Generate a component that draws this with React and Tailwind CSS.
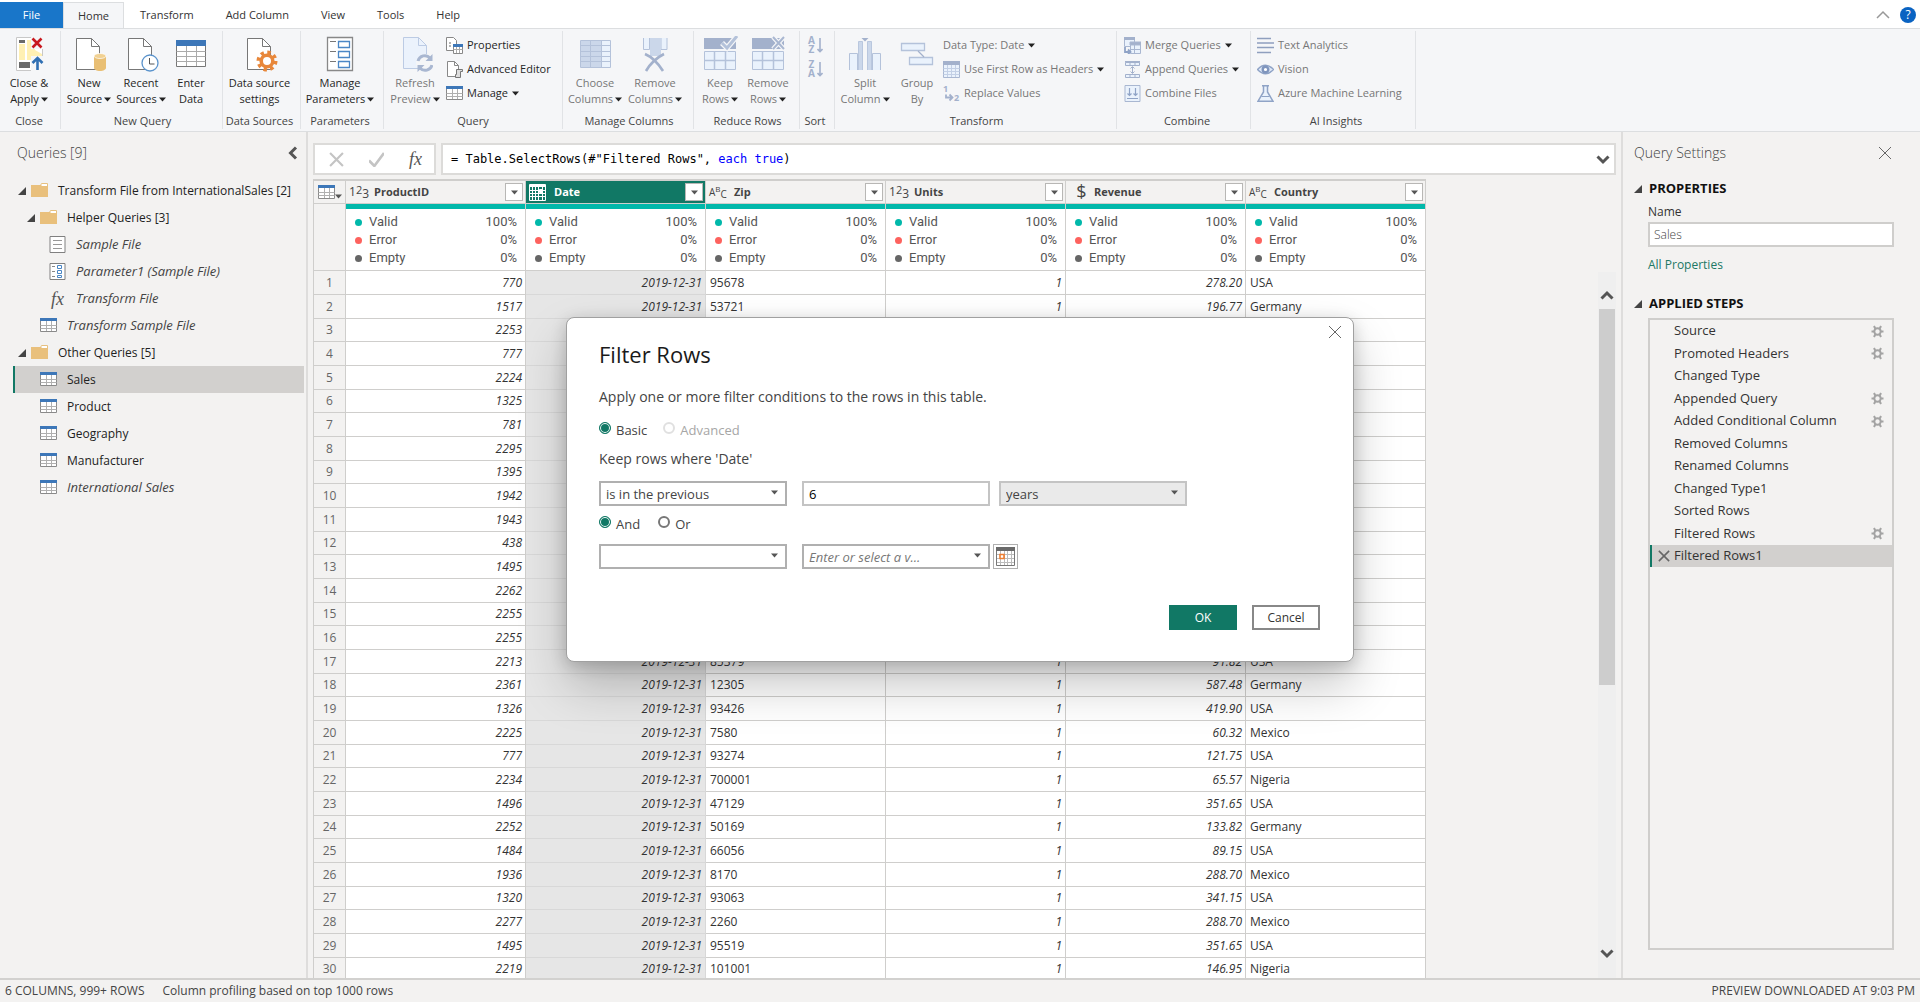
/**
 * @fileoverview Query editor window: ribbon, query list, data preview grid,
 * query settings and the "Filter Rows" dialog.
 */

import { useState } from 'react';

const TABS = ['Transform', 'Add Column', 'View', 'Tools', 'Help'];

const QUERIES = [
  { name: 'Transform File from InternationalSales [2]', type: 'folder', level: 0 },
  { name: 'Helper Queries [3]', type: 'folder', level: 1 },
  { name: 'Sample File', type: 'file', level: 2, italic: true },
  { name: 'Parameter1 (Sample File)', type: 'parameter', level: 2, italic: true },
  { name: 'Transform File', type: 'function', level: 2, italic: true },
  { name: 'Transform Sample File', type: 'table', level: 1, italic: true },
  { name: 'Other Queries [5]', type: 'folder', level: 0 },
  { name: 'Sales', type: 'table', level: 1 },
  { name: 'Product', type: 'table', level: 1 },
  { name: 'Geography', type: 'table', level: 1 },
  { name: 'Manufacturer', type: 'table', level: 1 },
  { name: 'International Sales', type: 'table', level: 1, italic: true },
];

const COLUMNS = [
  { name: 'ProductID', type: 'number' },
  { name: 'Date', type: 'date' },
  { name: 'Zip', type: 'text' },
  { name: 'Units', type: 'number' },
  { name: 'Revenue', type: 'currency' },
  { name: 'Country', type: 'text' },
];

const PROFILE = [
  { label: 'Valid', value: '100%', dot: 'bg-[#01b8aa]' },
  { label: 'Error', value: '0%', dot: 'bg-[#fd625e]' },
  { label: 'Empty', value: '0%', dot: 'bg-[#666666]' },
];

// [ProductID, Zip, Revenue, Country]
const ROWS = [
  [770, '95678', '278.20', 'USA'],
  [1517, '53721', '196.77', 'Germany'],
  [2253], [777], [2224], [1325], [781], [2295], [1395],
  [1942], [1943], [438], [1495], [2262], [2255], [2255],
  [2213, '85379', '91.82', 'USA'],
  [2361, '12305', '587.48', 'Germany'],
  [1326, '93426', '419.90', 'USA'],
  [2225, '7580', '60.32', 'Mexico'],
  [777, '93274', '121.75', 'USA'],
  [2234, '700001', '65.57', 'Nigeria'],
  [1496, '47129', '351.65', 'USA'],
  [2252, '50169', '133.82', 'Germany'],
  [1484, '66056', '89.15', 'USA'],
  [1936, '8170', '288.70', 'Mexico'],
  [1320, '93063', '341.15', 'USA'],
  [2277, '2260', '288.70', 'Mexico'],
  [1495, '95519', '351.65', 'USA'],
  [2219, '101001', '146.95', 'Nigeria'],
];

const STEPS = [
  { name: 'Source', settings: true },
  { name: 'Promoted Headers', settings: true },
  { name: 'Changed Type' },
  { name: 'Appended Query', settings: true },
  { name: 'Added Conditional Column', settings: true },
  { name: 'Removed Columns' },
  { name: 'Renamed Columns' },
  { name: 'Changed Type1' },
  { name: 'Sorted Rows' },
  { name: 'Filtered Rows', settings: true },
  { name: 'Filtered Rows1' },
];

/* ---------- Icons ---------- */

function Caret({ className = '' }) {
  return (
    <svg className={`inline-block shrink-0 ${className}`} width="7" height="5" viewBox="0 0 7 5" aria-hidden="true">
      <path d="M0 .5h7L3.5 4.5z" fill="currentColor" />
    </svg>
  );
}

function Chevron({ d, size = 14, width = 3, color = '#555' }) {
  return (
    <svg width={size} height={size} viewBox="0 0 14 14" fill="none" stroke={color} strokeWidth={width} aria-hidden="true">
      <path d={d} />
    </svg>
  );
}

function CrossIcon({ size = 14, width = 1, color = '#666' }) {
  return (
    <svg width={size} height={size} viewBox="0 0 14 14" stroke={color} strokeWidth={width} aria-hidden="true">
      <path d="M1 1l12 12M13 1L1 13" />
    </svg>
  );
}

function BigIcon({ children }) {
  return (
    <svg className="shrink-0" width="36" height="36" viewBox="0 0 36 36" fill="none" aria-hidden="true">
      {children}
    </svg>
  );
}

function SmallIcon({ children }) {
  return (
    <svg className="shrink-0" width="17" height="17" viewBox="0 0 17 17" fill="none" aria-hidden="true">
      {children}
    </svg>
  );
}

function CloseApplyIcon() {
  return (
    <BigIcon>
      <path d="M5.500 1.500h26v33h-26z" fill="#fff" stroke="#c8c8c8" />
      <path d="M8 8h6v16H8zM16 4h8v20h-8z" fill="#fff0b3" />
      <path d="M24 14l7 4v6h-7z" fill="#fff0b3" />
      <path d="M8 4h6v3H8zM8 26h11v6H8z" fill="#6a6a6a" />
      <path d="M20 0h13v13H20z" fill="#f5f6f8" />
      <path d="M21.500 2.500l9 9M30.500 2.500l-9 9" stroke="#c8181e" strokeWidth="2.600" />
      <path d="M20 20h13v15H20z" fill="#f5f6f8" />
      <path d="M26.500 34V23M21.500 27l5-5 5 5" stroke="#2f6fb3" strokeWidth="2.600" />
    </BigIcon>
  );
}

function NewSourceIcon() {
  return (
    <BigIcon>
      <path d="M5.500 2.500h15l8 8v23h-23z" fill="#fff" stroke="#777" />
      <path d="M20.500 2.500v8h8" stroke="#777" />
      <path d="M23 20v12c0 1.500 2.500 3 6 3s6-1.500 6-3V20z" fill="#e9bf74" />
      <ellipse cx="29" cy="20" rx="6" ry="2.500" fill="#f1d193" stroke="#fff" strokeWidth=".7" />
    </BigIcon>
  );
}

function RecentIcon() {
  return (
    <BigIcon>
      <path d="M5.500 2.500h15l8 8v23h-23z" fill="#fff" stroke="#777" />
      <path d="M20.500 2.500v8h8" stroke="#777" />
      <circle cx="27" cy="27" r="8" fill="#fff" stroke="#5a93cc" strokeWidth="1.300" />
      <path d="M26.500 22v6h5" stroke="#555" />
    </BigIcon>
  );
}

function EnterDataIcon() {
  return (
    <BigIcon>
      <path d="M3.500 5.500h29v25h-29z" fill="#fff" stroke="#777" />
      <path d="M3 4h30v6H3z" fill="#3d77b8" />
      <path d="M3.500 15.500h29M3.500 20.500h29M3.500 25.500h29M13.500 10v20M23.500 10v20" stroke="#aaa" />
    </BigIcon>
  );
}

function SourceSettingsIcon() {
  return (
    <BigIcon>
      <path d="M5.500 2.500h15l8 8v23h-23z" fill="#fff" stroke="#777" />
      <path d="M20.500 2.500v8h8" stroke="#777" />
      <circle cx="25" cy="25" r="8.500" fill="none" stroke="#e8873a" strokeWidth="4" strokeDasharray="3.340 3.340" />
      <circle cx="25" cy="25" r="5.800" fill="#fff" stroke="#e8873a" strokeWidth="3.600" />
    </BigIcon>
  );
}

function ParametersIcon() {
  return (
    <BigIcon>
      <path d="M5.500 1.500h25v33h-25z" fill="#fff" stroke="#888" strokeWidth="1.300" />
      <path d="M16.500 5.500h11v6h-11zM16.500 15.500h11v6h-11zM16.500 25.500h11v6h-11z" stroke="#4a86c5" strokeWidth="1.300" />
      <path d="M8 5.500h6M8 15.500h6M8 25.500h6" stroke="#777" />
    </BigIcon>
  );
}

function RefreshIcon() {
  return (
    <BigIcon>
      <path d="M6.500 1.500h15l8 8v23h-23z" fill="#ebf2fc" stroke="#bccbe4" />
      <path d="M21.500 1.500v8h8" stroke="#bccbe4" />
      <circle cx="28" cy="27" r="9" fill="#f5f6f8" />
      <path d="M21 25a7 7 0 0 1 12-3M35 29a7 7 0 0 1-12 3" stroke="#a9b7d1" strokeWidth="3" />
      <path d="M35.500 18v7h-7zM20.500 36v-7h7z" fill="#a9b7d1" />
    </BigIcon>
  );
}

function ChooseColumnsIcon() {
  return (
    <BigIcon>
      <path d="M3.500 4.500h30v27h-30z" fill="#eaf2fc" stroke="#b4c2da" />
      <path d="M4 5h20v26H4z" fill="#cbd7ea" />
      <path d="M3.500 9.500h30M3.500 15.500h30M3.500 20.500h30M3.500 25.500h30M13.500 5v26M24.500 5v26" stroke="#b4c2da" />
    </BigIcon>
  );
}

function RemoveColumnsIcon() {
  return (
    <BigIcon>
      <path d="M6.500 2v11.500h6V2M24 2v11.500h6V2" fill="#eaf2fc" stroke="#b4c2da" />
      <path d="M13 2h11v18H13z" fill="#cbd7ea" />
      <path d="M8 18c7 3 13 9 18 17M27 18c-8 4-14 10-18 17" stroke="#a3b1cc" strokeWidth="2.600" />
    </BigIcon>
  );
}

function RowsIcon({ cross }) {
  return (
    <BigIcon>
      <path d="M2 2h32v11H2z" fill="#a3b1cc" />
      <path d="M2.500 15.500h31v18h-31z" fill="#eaf2fc" stroke="#b4c2da" />
      <path d="M2.500 24.500h31M12.500 15v18M23.500 15v18" stroke="#b4c2da" strokeWidth="1.500" />
      {cross ? (
        <>
          <path d="M23 1l11 12M34 1L23 13" stroke="#f5f6f8" strokeWidth="4.500" />
          <path d="M23 1l11 12M34 1L23 13" stroke="#a9b7d1" strokeWidth="2" />
        </>
      ) : (
        <>
          <path d="M20 7l5 5L35 0" stroke="#f5f6f8" strokeWidth="5.500" />
          <path d="M20 7l5 5L35 0" stroke="#b4c2da" strokeWidth="3" />
        </>
      )}
    </BigIcon>
  );
}

function SplitIcon() {
  return (
    <BigIcon>
      <path d="M2.500 34V17.500h8V34M25.500 34V17.500h8V34" fill="#eaf2fc" stroke="#b4c2da" />
      <path d="M11.500 34V5.500h4V34M20.500 34V5.500h4V34" fill="#cbd7ea" stroke="#b9c7de" />
      <path d="M14.500 2h7L18 5.500z" fill="#a3b1cc" />
    </BigIcon>
  );
}

function GroupIcon() {
  return (
    <BigIcon>
      <path d="M2.500 7.500h23v7h-23zM10.500 21.500h23v7h-23z" fill="#eaf2fc" stroke="#b4c2da" strokeWidth="1.300" />
      <path d="M19 15l6 6" stroke="#a3b1cc" strokeWidth="1.300" />
    </BigIcon>
  );
}

function TableIcon() {
  return (
    <SmallIcon>
      <path d="M.500 1.500h16v13H.500z" fill="#fff" stroke="#8a8a8a" />
      <path d="M.500 8.500h16M.500 11.500h16M6.500 4v10M11.500 4v10" stroke="#b0b0b0" />
      <path d="M0 1h17v3H0z" fill="#3d77b8" />
    </SmallIcon>
  );
}

function HeadersIcon() {
  return (
    <SmallIcon>
      <path d="M.500.500h16v16H.500z" fill="#eaf2fc" stroke="#a9b7d1" />
      <path d="M.500 7.500h16M.500 10.500h16M.500 13.500h16M4.500 4v12M8.500 4v12M12.500 4v12" stroke="#c3d0e6" />
      <path d="M0 0h17v4H0z" fill="#a3b1cc" />
    </SmallIcon>
  );
}

function PropertiesIcon() {
  return (
    <SmallIcon>
      <path d="M.500.500h7l3 3v10H.500z" fill="#fff" stroke="#888" />
      <path d="M3 6h2M3 9h2" stroke="#666" />
      <path d="M7.500 7.500h9v9h-9z" fill="#fff" stroke="#888" />
      <path d="M7 7h10v3H7z" fill="#3d77b8" />
      <path d="M7.500 12.500h9M10.500 10v6M13.500 10v6" stroke="#aaa" />
    </SmallIcon>
  );
}

function EditorIcon() {
  return (
    <SmallIcon>
      <path d="M1.500.500h7l4 4v11h-11z" fill="#fff" stroke="#888" />
      <path d="M8.500.500v4h4" stroke="#888" />
      <path d="M10.500 8.500h6v2h-2v6h-5v-3h1z" fill="#ddd" stroke="#777" />
    </SmallIcon>
  );
}

function ReplaceIcon() {
  return (
    <SmallIcon>
      <text x="0" y="7" fontSize="9" fontWeight="700" fill="#a3b1cc">1</text>
      <text x="11" y="16" fontSize="9" fontWeight="700" fill="#a3b1cc">2</text>
      <path d="M3 9.500v3h6M6.500 9.500l3 3-3 3" stroke="#a3b1cc" strokeWidth="1.800" />
    </SmallIcon>
  );
}

function MergeIcon() {
  return (
    <SmallIcon>
      <path d="M.500.500h10v9H.500z" fill="#eaf2fc" stroke="#a9b7d1" />
      <path d="M0 0h11v3H0z" fill="#a3b1cc" />
      <path d="M6.500 5.500h10v11h-10z" fill="#eaf2fc" stroke="#a9b7d1" />
      <path d="M6 5h11v3H6zM10.500 8v8M6.500 12.500h10" fill="#a3b1cc" stroke="#a9b7d1" />
      <path d="M1 10v5h5M4 12.500L6.500 15 4 17" stroke="#8fa3c6" strokeWidth="1.800" />
    </SmallIcon>
  );
}

function AppendIcon() {
  return (
    <SmallIcon>
      <path d="M1.500 1.500h14v3h-14zM1.500 13.500h14v3h-14zM6 2v2M11 2v2M6 14v2M11 14v2" fill="#eaf2fc" stroke="#a3b1cc" />
      <path d="M1 .500h15" stroke="#a3b1cc" strokeWidth="2" />
      <path d="M8.500 6v6M6.500 7.500l2-2 2 2M6.500 10.500l2 2 2-2" stroke="#a3b1cc" />
    </SmallIcon>
  );
}

function CombineIcon() {
  return (
    <SmallIcon>
      <path d="M1 .500h15v16H1z" fill="#eaf2fc" stroke="#a9b7d1" />
      <path d="M5.500 3v7M3.500 8.500l2 2 2-2M11.500 3v7M9.500 8.500l2 2 2-2M3 13.500h11" stroke="#8fa3c6" strokeWidth="1.200" />
    </SmallIcon>
  );
}

function TextAnalyticsIcon() {
  return (
    <SmallIcon>
      <path d="M0 1.500h14M0 6h17M0 10.500h17M0 15.500h14" stroke="#8f9fbe" strokeWidth="1.600" />
    </SmallIcon>
  );
}

function VisionIcon() {
  return (
    <SmallIcon>
      <path d="M.500 8.500Q8.500 0 16.500 8.500 8.500 17 .500 8.500z" fill="#dfe9f8" stroke="#8fa3c6" strokeWidth="1.500" />
      <circle cx="8.500" cy="8.500" r="2.800" fill="#fff" stroke="#7f95bd" strokeWidth="2.400" />
    </SmallIcon>
  );
}

function FlaskIcon() {
  return (
    <SmallIcon>
      <path d="M5 .800h7M6.500 1v6L1 16.200h15L10.500 7V1" fill="#eaf2fc" stroke="#8fa3c6" strokeWidth="1.500" />
      <path d="M4.500 11.500h8" stroke="#8fa3c6" />
    </SmallIcon>
  );
}

function SortIcon({ top, bottom }) {
  return (
    <span className="flex gap-px text-[10px] leading-[9px] font-bold text-[#a3b1cc]">
      <span className="flex w-2 flex-col items-center">
        <span>{top}</span>
        <span>{bottom}</span>
      </span>
      <svg width="6" height="18" viewBox="0 0 6 18" fill="none" stroke="currentColor" strokeWidth="1.600" aria-hidden="true">
        <path d="M3 2v14M.500 13L3 15.500 5.500 13" />
      </svg>
    </span>
  );
}

function QueryIcon({ type }) {
  if (type === 'folder') {
    return (
      <SmallIcon>
        <path d="M9.500 3.500l1-2h6v3" fill="#fff" stroke="#e6c080" />
        <path d="M0 3h10l1 1h6v11H0z" fill="#e9c07c" />
      </SmallIcon>
    );
  }
  if (type === 'file') {
    return (
      <SmallIcon>
        <path d="M1 .500h15v16H1z" fill="#fff" stroke="#808080" />
        <path d="M4 4.500h9M4 8.500h9M4 12.500h9" stroke="#999" />
      </SmallIcon>
    );
  }
  if (type === 'parameter') {
    return (
      <SmallIcon>
        <path d="M1 .500h15v16H1z" fill="#fff" stroke="#808080" />
        <path d="M8.500 2.500h4v3h-4zM8.500 7.500h4v3h-4zM8.500 12.500h4v2h-4z" stroke="#4a86c5" />
        <path d="M3 3.500h3M3 8.500h3M3 13.500h3" stroke="#888" />
      </SmallIcon>
    );
  }
  if (type === 'function') {
    return <span className="w-[17px] text-center font-['Liberation_Serif',serif] text-lg leading-4 text-[#555] italic">fx</span>;
  }
  return <TableIcon />;
}

function TypeIcon({ type }) {
  if (type === 'date') {
    return (
      <svg width="17" height="17" viewBox="0 0 17 17" fill="none" stroke="#fff" aria-hidden="true">
        <path d="M.500.500h16v16H.500z" />
        <path d="M0 2h17" strokeWidth="2" />
        <path d="M.500 6.500h16M.500 9.500h16M.500 12.500h16M3.500 3v13M6.500 3v13M9.500 3v13M13.500 3v13" />
        <path d="M10.500 5.500h3v3h-3z" fill="#fff" />
      </svg>
    );
  }
  if (type === 'currency') {
    return <span className="text-lg leading-5 font-normal">$</span>;
  }
  const [a, b, c] = type === 'number' ? ['1', '2', '3'] : ['A', 'B', 'C'];
  return (
    <span className={`flex items-center leading-none font-normal ${type === 'number' ? 'text-[12px]' : 'text-[10px]'}`}>
      <span>{a}</span>
      <span className={`-mt-1.5 ${type === 'number' ? 'text-[11px]' : 'text-[8px]'}`}>{b}</span>
      <span className="mt-1">{c}</span>
    </span>
  );
}

function GearIcon() {
  return (
    <svg width="13" height="13" viewBox="0 0 13 13" fill="none" stroke="#a3a3a3" aria-hidden="true">
      <circle cx="6.500" cy="6.500" r="3.200" strokeWidth="2" />
      <path d="M3 6.500H.500M10 6.500h2.500M4.500 4L3 1M8.500 4L10 1M4.500 9L3 12M8.500 9l1.500 3" strokeWidth="2" />
    </svg>
  );
}

function CalendarIcon() {
  return (
    <svg width="19" height="19" viewBox="0 0 19 19" fill="none" aria-hidden="true">
      <path d="M.500.500h18v18H.500z" fill="#fff" stroke="#777" />
      <path d="M1 7.500h17M1 11.500h17M1 15.500h17M4.500 4v14M8.500 4v14M11.500 4v14M15.500 4v14" stroke="#bbb" />
      <path d="M0 0h19v4H0z" fill="#6a6a6a" />
      <path d="M4 7.500h4v4H4z" fill="#fff" stroke="#ed7d31" strokeWidth="1.600" />
    </svg>
  );
}

function ExpandArrow() {
  return (
    <svg className="shrink-0" width="8" height="8" viewBox="0 0 8 8" aria-hidden="true">
      <path d="M8 0v8H0z" fill="#444" />
    </svg>
  );
}

/* ---------- Ribbon ---------- */

function RibbonGroup({ label, className, children }) {
  return (
    <section className={`flex shrink-0 flex-col border-r border-[#e1e3e6] ${className}`}>
      <div className="flex h-[82px] pt-[5px]">{children}</div>
      <h2 className="text-center text-[11px] leading-4 text-[#444]">{label}</h2>
    </section>
  );
}

function BigButton({ icon, lines, caret, disabled, className }) {
  return (
    <button
      type="button"
      disabled={disabled}
      className={`flex h-[72px] shrink-0 flex-col items-center text-[11px] leading-4 whitespace-nowrap ${disabled ? 'text-[#777]' : 'text-[#262626]'} ${className}`}
    >
      {icon}
      <span className="pt-[3px]">{lines[0]}</span>
      <span className="flex items-center gap-0.5">
        {lines[1]}
        {caret && <Caret className="text-[#222]" />}
      </span>
    </button>
  );
}

function SmallColumn({ children }) {
  return <div className="-mt-[3px]">{children}</div>;
}

function SmallButton({ icon, label, caret, disabled }) {
  return (
    <button
      type="button"
      disabled={disabled}
      className={`flex h-6 items-center gap-1 text-[11px] whitespace-nowrap ${disabled ? 'text-[#777]' : 'text-[#262626]'}`}
    >
      {icon}
      {label}
      {caret && <Caret className="text-[#222]" />}
    </button>
  );
}

function Ribbon() {
  return (
    <div className="flex overflow-hidden border-y border-[#dcdee0] bg-[#f5f6f8] py-0.5">
      <RibbonGroup label="Close" className="w-[61px] pr-0.5">
        <BigButton className="w-[58px]" icon={<CloseApplyIcon />} lines={['Close &', 'Apply']} caret />
      </RibbonGroup>
      <RibbonGroup label="New Query" className="w-[162px] pl-0.5">
        <BigButton className="w-[52px]" icon={<NewSourceIcon />} lines={['New', 'Source']} caret />
        <BigButton className="w-[52px]" icon={<RecentIcon />} lines={['Recent', 'Sources']} caret />
        <BigButton className="w-12" icon={<EnterDataIcon />} lines={['Enter', 'Data']} />
      </RibbonGroup>
      <RibbonGroup label="Data Sources" className="w-[78px] pr-1">
        <BigButton className="w-full" icon={<SourceSettingsIcon />} lines={['Data source', 'settings']} />
      </RibbonGroup>
      <RibbonGroup label="Parameters" className="w-[83px] pr-1">
        <BigButton className="w-full" icon={<ParametersIcon />} lines={['Manage', 'Parameters']} caret />
      </RibbonGroup>
      <RibbonGroup label="Query" className="w-[179px]">
        <BigButton className="w-[62px]" icon={<RefreshIcon />} lines={['Refresh', 'Preview']} caret disabled />
        <SmallColumn>
          <SmallButton icon={<PropertiesIcon />} label="Properties" />
          <SmallButton icon={<EditorIcon />} label="Advanced Editor" />
          <SmallButton icon={<TableIcon />} label="Manage" caret />
        </SmallColumn>
      </RibbonGroup>
      <RibbonGroup label="Manage Columns" className="w-[131px] pl-0.5">
        <BigButton className="w-[60px]" icon={<ChooseColumnsIcon />} lines={['Choose', 'Columns']} caret disabled />
        <BigButton className="w-[60px]" icon={<RemoveColumnsIcon />} lines={['Remove', 'Columns']} caret disabled />
      </RibbonGroup>
      <RibbonGroup label="Reduce Rows" className="w-[106px] pl-0.5">
        <BigButton className="w-12" icon={<RowsIcon />} lines={['Keep', 'Rows']} caret disabled />
        <BigButton className="w-12" icon={<RowsIcon cross />} lines={['Remove', 'Rows']} caret disabled />
      </RibbonGroup>
      <RibbonGroup label="Sort" className="w-[35px] pr-1">
        <div className="flex w-full flex-col items-center gap-1.5">
          <button type="button" disabled aria-label="Sort ascending"><SortIcon top="A" bottom="Z" /></button>
          <button type="button" disabled aria-label="Sort descending"><SortIcon top="Z" bottom="A" /></button>
        </div>
      </RibbonGroup>
      <RibbonGroup label="Transform" className="w-[282px] pl-0.5">
        <BigButton className="w-14" icon={<SplitIcon />} lines={['Split', 'Column']} caret disabled />
        <BigButton className="w-12" icon={<GroupIcon />} lines={['Group', 'By']} disabled />
        <div className="pl-0.5">
          <SmallColumn>
            <SmallButton label="Data Type: Date" caret disabled />
            <SmallButton icon={<HeadersIcon />} label="Use First Row as Headers" caret disabled />
            <SmallButton icon={<ReplaceIcon />} label="Replace Values" disabled />
          </SmallColumn>
        </div>
      </RibbonGroup>
      <RibbonGroup label="Combine" className="w-[134px] pl-[7px]">
        <SmallColumn>
          <SmallButton icon={<MergeIcon />} label="Merge Queries" caret disabled />
          <SmallButton icon={<AppendIcon />} label="Append Queries" caret disabled />
          <SmallButton icon={<CombineIcon />} label="Combine Files" disabled />
        </SmallColumn>
      </RibbonGroup>
      <RibbonGroup label="AI Insights" className="w-[165px] pl-1.5">
        <SmallColumn>
          <SmallButton icon={<TextAnalyticsIcon />} label="Text Analytics" disabled />
          <SmallButton icon={<VisionIcon />} label="Vision" disabled />
          <SmallButton icon={<FlaskIcon />} label="Azure Machine Learning" disabled />
        </SmallColumn>
      </RibbonGroup>
    </div>
  );
}

function TabBar() {
  return (
    <nav className="flex h-[28px] shrink-0 bg-white pt-0.5 text-[11px] text-[#333]">
      <button type="button" className="w-[63px] bg-[#1976c9] text-white">File</button>
      <button type="button" className="-mb-px w-[61px] border-x border-t border-[#dcdee0] bg-[#f5f6f8]">Home</button>
      {TABS.map(tab => (
        <button key={tab} type="button" className="px-4">{tab}</button>
      ))}
      <div className="ml-auto flex items-center gap-2.5 pr-1">
        <button type="button" aria-label="Collapse ribbon">
          <Chevron d="M1 10l6-6 6 6" width={1.5} color="#999" />
        </button>
        <button type="button" aria-label="Help" className="size-4 rounded-full bg-[#0a63c2] text-[12px] leading-4 text-white">?</button>
      </div>
    </nav>
  );
}

/* ---------- Queries pane ---------- */

function QueriesPane({ selected, onSelect }) {
  return (
    <aside className="w-[308px] shrink-0 border-r-2 border-[#dedddc]">
      <div className="mb-[3px] flex h-[42px] items-center justify-between pr-1.5 pl-[17px]">
        <h2 className="text-sm font-light text-[#444]">Queries [9]</h2>
        <button type="button" aria-label="Collapse queries pane"><Chevron d="M10 1.500L4.500 7l5.500 5.500" /></button>
      </div>
      <ul>
        {QUERIES.map(q => (
          <li key={q.name} className="pr-0.5 pl-[13px]">
            <button
              type="button"
              onClick={() => onSelect(q.name)}
              className={`flex h-[27px] w-full items-center border-l-2 whitespace-nowrap ${selected === q.name ? 'border-[#117865] bg-[#d2d0ce]' : 'border-transparent'}`}
            >
              <span className={`flex justify-end ${q.level === 0 ? 'w-[11px]' : q.level === 1 ? 'w-5' : 'w-[29px]'}`}>
                {q.type === 'folder' && <ExpandArrow />}
              </span>
              <span className="ml-[5px] flex w-[17px]"><QueryIcon type={q.type} /></span>
              <span className={`ml-2.5 ${q.italic ? 'text-[13px] text-[#444] italic' : 'text-[12px] text-[#222]'}`}>{q.name}</span>
            </button>
          </li>
        ))}
      </ul>
    </aside>
  );
}

/* ---------- Data preview ---------- */

function FormulaBar() {
  return (
    <div className="flex h-8 shrink-0 gap-[5px]">
      <div className="flex w-[123px] items-center justify-between border-2 border-[#dcdbd9] bg-white pr-3 pl-3.5">
        <button type="button" aria-label="Discard formula"><CrossIcon size={15} width={2} color="#c4c4c4" /></button>
        <button type="button" aria-label="Commit formula"><Chevron d="M0 8l5 5L14 1" size={15} width={2.5} color="#c4c4c4" /></button>
        <button type="button" className="font-['Liberation_Serif',serif] text-lg leading-6 text-[#555] italic">fx</button>
      </div>
      <div className="flex flex-1 items-center border-2 border-[#dcdbd9] bg-white pr-1 pl-2">
        <code className="flex-1 font-['DejaVu_Sans_Mono',monospace] text-[12px] whitespace-pre text-black">
          = Table.SelectRows(#"Filtered Rows", <span className="text-[#0000ff]">each true</span>)
        </code>
        <button type="button" aria-label="Expand formula bar"><Chevron d="M1.500 4.500L7 10l5.500-5.500" /></button>
      </div>
    </div>
  );
}

function ColumnHeader({ column, active }) {
  return (
    <th scope="col" className={`border-r border-b border-[#cfcecc] p-0 ${active ? 'bg-[#117865] text-white' : 'text-[#444]'}`}>
      <div className="flex h-[22px] items-center pr-0.5 pl-[3px]">
        <span className="w-[25px] shrink-0"><TypeIcon type={column.type} /></span>
        <span className="flex-1 text-left text-[11px]">{column.name}</span>
        <button type="button" aria-label={`Filter ${column.name}`} className="flex size-[18px] items-center justify-center border border-[#b8b7b5] bg-white text-[#555]">
          <Caret />
        </button>
      </div>
    </th>
  );
}

function ProfileCell() {
  return (
    <td className="border-r border-b border-[#cfcecc] bg-white p-0">
      <div className="h-[5px] bg-[#01b8aa]" />
      <ul className="px-2 pt-1 pb-[3px] pl-[9px] font-['Roboto',sans-serif] text-[13px] leading-[18px] text-[#555]">
        {PROFILE.map(p => (
          <li key={p.label} className="flex items-center">
            <span className={`mr-[7px] size-[7px] rounded-full ${p.dot}`} />
            <span className="flex-1">{p.label}</span>
            <span>{p.value}</span>
          </li>
        ))}
      </ul>
    </td>
  );
}

function DataGrid() {
  const cell = 'border-r border-b border-[#cfcecc] py-0';
  return (
    <table className="w-[1113px] shrink-0 table-fixed border-separate border-spacing-0 border-t-2 border-l border-[#cfcecc] text-[12px] leading-5 text-[#333]">
      <colgroup>
        <col className="w-8" />
        {COLUMNS.map(c => <col key={c.name} className="w-[180px]" />)}
      </colgroup>
      <thead>
        <tr>
          <th className="border-r border-b border-[#cfcecc] p-0">
            <button type="button" aria-label="Table options" className="flex h-[22px] w-full items-center justify-center">
              <TableIcon />
              <Caret className="mt-2 text-[#555]" />
            </button>
          </th>
          {COLUMNS.map(c => <ColumnHeader key={c.name} column={c} active={c.name === 'Date'} />)}
        </tr>
      </thead>
      <tbody>
        <tr>
          <td className={cell} />
          {COLUMNS.map(c => <ProfileCell key={c.name} />)}
        </tr>
        {ROWS.map(([id, zip, revenue, country], i) => (
          <tr key={i} className={i % 3 === 2 ? 'h-[23px]' : 'h-6'}>
            <td className={`${cell} text-center text-[#666]`}>{i + 1}</td>
            <td className={`${cell} bg-white pr-[3px] text-right italic`}>{id}</td>
            <td className="border-r border-b border-[#d8d8d8] bg-[#e6e6e6] py-0 pr-[3px] text-right italic">2019-12-31</td>
            <td className={`${cell} bg-white pl-1`}>{zip}</td>
            <td className={`${cell} bg-white pr-[3px] text-right italic`}>1</td>
            <td className={`${cell} bg-white pr-[3px] text-right italic`}>{revenue}</td>
            <td className={`${cell} bg-white pl-1`}>{country}</td>
          </tr>
        ))}
      </tbody>
    </table>
  );
}

function ScrollBar() {
  return (
    <div className="mt-[93px] flex w-[18px] flex-col items-center bg-[#efefef]">
      <button type="button" aria-label="Scroll up" className="flex h-[37px] items-end pb-1.5"><Chevron d="M1.500 9.500L7 4l5.500 5.500" /></button>
      <div className="w-4 flex-1">
        <div className="h-[59%] bg-[#cdcdcd]" />
      </div>
      <button type="button" aria-label="Scroll down" className="flex h-8"><Chevron d="M1.500 4.500L7 10l5.500-5.500" /></button>
    </div>
  );
}

/* ---------- Query settings ---------- */

function SettingsPane() {
  const [name, setName] = useState('Sales');
  const [current, setCurrent] = useState('Filtered Rows1');

  return (
    <aside className="flex w-[299px] shrink-0 flex-col border-l-2 border-[#dedddc] pr-[26px] pl-[11px] text-[#333]">
      <div className="flex h-[42px] items-center justify-between pr-0.5">
        <h2 className="text-sm font-light text-[#444]">Query Settings</h2>
        <button type="button" aria-label="Close query settings"><CrossIcon /></button>
      </div>
      <h3 className="flex h-[29px] items-center gap-[7px] text-[13px] font-bold text-[#111]"><ExpandArrow />PROPERTIES</h3>
      <div className="flex flex-col pl-[14px]">
        <label htmlFor="query-name" className="text-[12px] leading-[18px]">Name</label>
        <input
          id="query-name"
          value={name}
          onChange={(e) => setName(e.target.value)}
          className="mt-px h-[25px] border-2 border-[#cfcecc] bg-white px-1 text-[12px] font-light text-[#444]"
        />
        <a href="#properties" className="pt-[9px] text-[12px] leading-[18px] text-[#217865]">All Properties</a>
      </div>
      <h3 className="mt-4 flex h-7 items-center gap-[7px] text-[13px] font-bold text-[#111]"><ExpandArrow />APPLIED STEPS</h3>
      <ol className="mb-7 ml-[14px] flex-1 border-2 border-[#cfcecc]">
        {STEPS.map(step => (
          <li key={step.name} className="odd:h-[22px] even:h-[23px]">
            <button
              type="button"
              onClick={() => setCurrent(step.name)}
              className={`flex size-full items-center border-l-2 pr-2 text-left text-[13px] ${current === step.name ? 'border-[#117865] bg-[#d2d0ce]' : 'border-transparent'}`}
            >
              <span className="flex w-[22px] shrink-0 justify-center pl-0.5">
                {current === step.name && <CrossIcon size={12} width={1.8} />}
              </span>
              <span className="flex-1 whitespace-nowrap">{step.name}</span>
              {step.settings && <GearIcon />}
            </button>
          </li>
        ))}
      </ol>
    </aside>
  );
}

/* ---------- Filter dialog ---------- */

function Radio({ name, label, ...props }) {
  return (
    <label className={`flex items-center gap-[5px] ${props.disabled ? 'text-[#a6a6a6]' : ''}`}>
      <input
        type="radio"
        name={name}
        {...props}
        className="mb-1 size-3 appearance-none rounded-full border-2 border-[#777] bg-white checked:border checked:border-[#117865] checked:bg-[#117865] checked:shadow-[inset_0_0_0_1px_#fff] disabled:border-[#e0e0e0]"
      />
      {label}
    </label>
  );
}

function Dropdown({ label, options, disabled }) {
  return (
    <div className="relative w-[188px]">
      <select
        aria-label={label}
        disabled={disabled}
        className="h-[25px] w-full appearance-none border-2 border-[#b0b0b0] bg-white px-[5px] text-[13px] leading-5 disabled:border-[#c4c4c4] disabled:bg-[#eaeaea] disabled:opacity-100"
      >
        {options.map(o => <option key={o}>{o}</option>)}
      </select>
      <Caret className="pointer-events-none absolute top-[9px] right-[9px] text-[#555]" />
    </div>
  );
}

function FilterDialog() {
  const [mode, setMode] = useState('basic');
  const [operator, setOperator] = useState('and');
  const [count, setCount] = useState('6');

  return (
    <div className="absolute inset-x-0 top-[317px] flex justify-center">
      <form
        role="dialog"
        aria-labelledby="filter-title"
        onSubmit={(e) => e.preventDefault()}
        className="w-full max-w-[788px] rounded-lg border border-[#a0a0a0] bg-white pb-[31px] pl-8 text-[13px] text-[#444] shadow-[0_24px_48px_rgba(0,0,0,0.22),0_4px_16px_rgba(0,0,0,0.18)]"
      >
        <div className="flex items-start justify-between pt-[7px] pr-[11px]">
          <h1 id="filter-title" className="pt-[13px] text-[22px] leading-8 text-[#1a1a1a]">Filter Rows</h1>
          <button type="button" aria-label="Close dialog"><CrossIcon /></button>
        </div>
        <p className="pt-[17px] text-sm leading-5">Apply one or more filter conditions to the rows in this table.</p>

        <div className="flex gap-4 pt-[13px] leading-5">
          <Radio name="mode" label="Basic" checked={mode === 'basic'} onChange={() => setMode('basic')} />
          <Radio name="mode" label="Advanced" disabled checked={mode === 'advanced'} onChange={() => setMode('advanced')} />
        </div>

        <p className="pt-[9px] text-sm leading-5">Keep rows where 'Date'</p>

        <div className="flex pt-3">
          <Dropdown label="Operator" options={['is in the previous']} />
          <input
            aria-label="Number of periods"
            value={count}
            onChange={(e) => setCount(e.target.value)}
            className="ml-[15px] h-[25px] w-[188px] border-2 border-[#c4c4c4] px-[5px] text-black"
          />
          <div className="ml-[9px]"><Dropdown label="Period" options={['years']} disabled /></div>
        </div>

        <div className="flex gap-[18px] pt-2 leading-5">
          <Radio name="operator" label="And" checked={operator === 'and'} onChange={() => setOperator('and')} />
          <Radio name="operator" label="Or" checked={operator === 'or'} onChange={() => setOperator('or')} />
        </div>

        <div className="flex pt-2.5">
          <Dropdown label="Second operator" options={['']} />
          <div className="relative ml-[15px] w-[188px]">
            <input
              aria-label="Value"
              placeholder="Enter or select a v..."
              className="h-[25px] w-full border-2 border-[#b0b0b0] pr-6 pl-[5px] placeholder:text-[#777] placeholder:italic"
            />
            <Caret className="pointer-events-none absolute top-[9px] right-[9px] text-[#555]" />
          </div>
          <button type="button" aria-label="Pick a date" className="ml-[3px] flex size-[25px] items-center justify-center border border-[#b0b0b0]">
            <CalendarIcon />
          </button>
        </div>

        <div className="flex justify-end gap-[15px] pt-9 pr-[33px] text-[12px]">
          <button type="submit" className="h-[25px] w-[68px] bg-[#117865] text-white">OK</button>
          <button type="button" className="h-[25px] w-[68px] border-2 border-[#888] text-[#333]">Cancel</button>
        </div>
      </form>
    </div>
  );
}

function App() {
  const [query, setQuery] = useState('Sales');

  return (
    <div className="relative flex h-screen flex-col overflow-hidden bg-[#f3f2f1] font-['Open_Sans','Noto_Sans',sans-serif]">
      <TabBar />
      <Ribbon />
      <main className="flex min-h-0 flex-1">
        <QueriesPane selected={query} onSelect={setQuery} />
        <div className="flex min-w-0 flex-1 flex-col pt-[11px] pr-[5px] pl-[5px]">
          <FormulaBar />
          <div className="flex min-h-0 flex-1 items-stretch justify-between overflow-hidden pt-1">
            <div className="overflow-hidden"><DataGrid /></div>
            <ScrollBar />
          </div>
        </div>
        <SettingsPane />
      </main>
      <footer className="flex h-6 shrink-0 items-center gap-[18px] border-t-2 border-[#d2d1cf] px-[5px] text-[12px] text-[#444]">
        <span>6 COLUMNS, 999+ ROWS</span>
        <span className="flex-1">Column profiling based on top 1000 rows</span>
        <span>PREVIEW DOWNLOADED AT 9:03 PM</span>
      </footer>
      <FilterDialog />
    </div>
  );
}

export default App;
